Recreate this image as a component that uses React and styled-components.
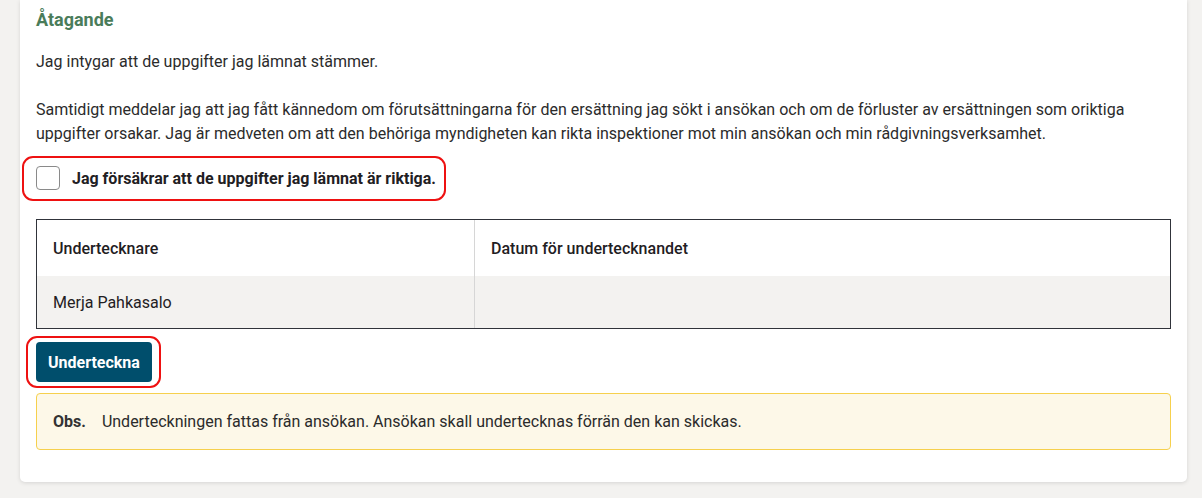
import React from 'react';
import styled, { createGlobalStyle } from 'styled-components';

const GlobalStyle = createGlobalStyle`
  html, body {
    margin: 0;
    padding: 0;
    background: #f3f2f0;
    font-family: Roboto, "Liberation Sans", Arial, sans-serif;
    color: #2b2b2b;
  }
  * { box-sizing: border-box; }
`;

const Page = styled.div`
  padding: 0 15px 15px 20px;
`;

const Card = styled.section`
  background: #fff;
  border-radius: 0 0 5px 5px;
  box-shadow: 0 1px 4px rgba(0, 0, 0, 0.12);
  padding: 8px 16px 32px;
`;

const Title = styled.h3`
  margin: 0;
  font-size: 18px;
  line-height: 24px;
  font-weight: 700;
  color: #4a7c5a;
`;

const Text = styled.p`
  margin: ${(p) => p.$top || 0}px 0 0;
  font-size: 16px;
  line-height: 24px;
`;

const Highlight = styled.div`
  display: inline-flex;
  align-items: center;
  border: 2px solid #ee1111;
  border-radius: 11px;
  margin-left: ${(p) => -p.$offset}px;
  padding: ${(p) => p.$pad};
`;

const CheckRow = styled.label`
  display: flex;
  align-items: center;
  gap: 12px;
  font-size: 16px;
  font-weight: 700;
  color: #1f2023;
  cursor: pointer;
`;

const Box = styled.span`
  width: 24px;
  height: 24px;
  border: 1px solid #8a8a8a;
  border-radius: 4px;
  background: #fff;
`;

const Table = styled.div`
  margin-top: 18px;
  border: 1px solid #30333a;
  display: grid;
  grid-template-columns: 437px 1fr;
`;

const Cell = styled.div`
  display: flex;
  align-items: center;
  height: ${(p) => (p.$head ? 56 : 52)}px;
  padding: 0 16px;
  font-size: 16px;
  font-weight: ${(p) => (p.$head ? 500 : 400)};
  color: #1f2023;
  background: ${(p) => (p.$head ? '#fff' : '#f3f2f0')};
  border-left: ${(p) => (p.$last ? '1px solid #d6d6d6' : 'none')};
`;

const ButtonWrap = styled.div`
  margin-top: 7px;
`;

const Button = styled.button`
  height: 40px;
  padding: 0 12px;
  border: none;
  border-radius: 4px;
  background: #004e6c;
  color: #fff;
  font-family: inherit;
  font-size: 16px;
  font-weight: 700;
  cursor: pointer;
`;

const Notice = styled.div`
  margin-top: 5px;
  height: 57px;
  display: flex;
  align-items: center;
  gap: 16px;
  padding: 0 16px;
  background: #fdf8e8;
  border: 1px solid #f6d04d;
  border-radius: 4px;
  font-size: 16px;
  color: #2b2b2b;
`;

const Obs = styled.strong`
  font-weight: 700;
  color: #333;
`;

export default function App() {
  return (
    <>
      <GlobalStyle />
      <Page>
        <Card>
          <Title>Åtagande</Title>
          <Text $top={18}>Jag intygar att de uppgifter jag lämnat stämmer.</Text>
          <Text $top={24}>
            Samtidigt meddelar jag att jag fått kännedom om förutsättningarna för den ersättning jag sökt i
            ansökan och om de förluster av ersättningen som oriktiga uppgifter orsakar. Jag är medveten om att
            den behöriga myndigheten kan rikta inspektioner mot min ansökan och min rådgivningsverksamhet.
          </Text>
          <div style={{ marginTop: 10 }}>
            <Highlight $offset={14} $pad="8px 8px 9px 12px">
              <CheckRow>
                <Box />
                Jag försäkrar att de uppgifter jag lämnat är riktiga.
              </CheckRow>
            </Highlight>
          </div>
          <Table>
            <Cell $head>Undertecknare</Cell>
            <Cell $head $last>Datum för undertecknandet</Cell>
            <Cell>Merja Pahkasalo</Cell>
            <Cell $last />
          </Table>
          <ButtonWrap>
            <Highlight $offset={10} $pad="4px 7px 4px 8px">
              <Button>Underteckna</Button>
            </Highlight>
          </ButtonWrap>
          <Notice>
            <Obs>Obs.</Obs>
            Underteckningen fattas från ansökan. Ansökan skall undertecknas förrän den kan skickas.
          </Notice>
        </Card>
      </Page>
    </>
  );
}
